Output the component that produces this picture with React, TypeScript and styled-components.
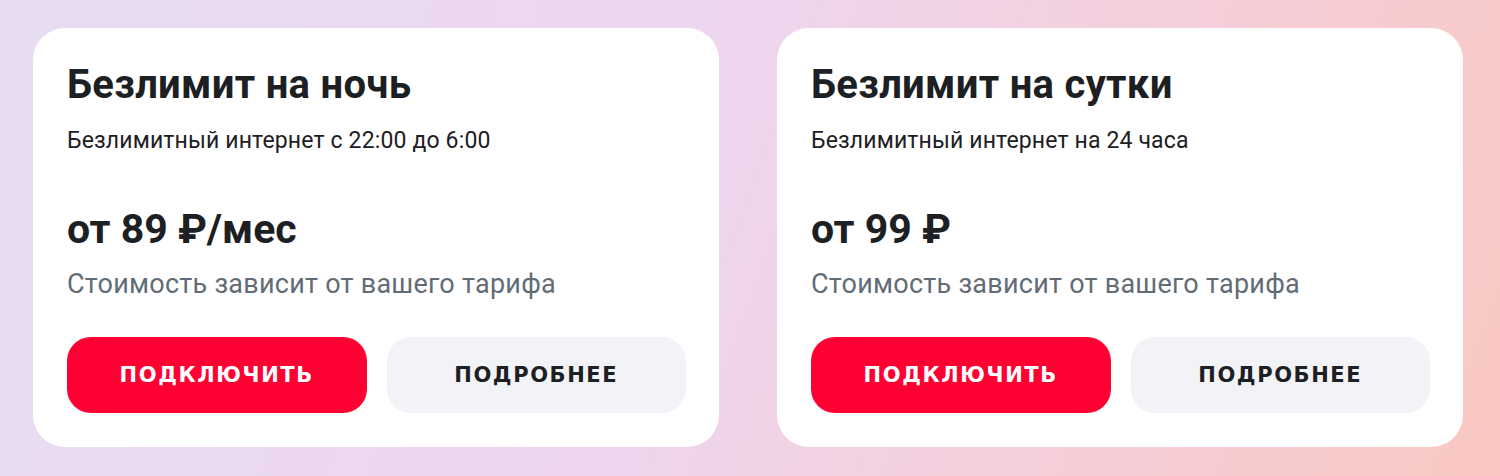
import React from "react";
import styled, { createGlobalStyle } from "styled-components";

const GlobalStyle = createGlobalStyle`
  html, body {
    margin: 0;
    padding: 0;
  }
  body {
    width: 1500px;
    height: 476px;
    overflow: hidden;
    font-family: Roboto, "Noto Sans", Arial, sans-serif;
    -webkit-font-smoothing: antialiased;
  }
  * { box-sizing: border-box; }
`;

const Page = styled.div`
  width: 1500px;
  height: 476px;
  padding: 28px 37px 29px 33px;
  background: linear-gradient(110deg, #e8ddf3 0%, #eed6ef 45%, #f4cfdb 70%, #fac8c2 100%);
  display: flex;
  gap: 58px;
`;

const Card = styled.section`
  flex: 1 1 0;
  height: 419px;
  background: #ffffff;
  border-radius: 32px;
  padding: 33px 33px 34px 34px;
  display: flex;
  flex-direction: column;
`;

const Title = styled.h2`
  margin: 0;
  font-family: Roboto, Arial, sans-serif;
  font-weight: 700;
  font-size: 40px;
  line-height: 48px;
  color: #1d2023;
  letter-spacing: 0.3px;
`;

const Subtitle = styled.p`
  margin: 17px 0 0;
  font-size: 23px;
  line-height: 30px;
  font-weight: 400;
  color: #1d2023;
  letter-spacing: 0.15px;
`;

const Price = styled.div`
  margin-top: 49px;
  font-weight: 700;
  font-size: 41px;
  line-height: 48px;
  color: #1d2023;
`;

const Note = styled.p`
  margin: 14px 0 0;
  font-size: 27px;
  line-height: 34px;
  color: #626c77;
  letter-spacing: 0.25px;
`;

const Actions = styled.div`
  margin-top: auto;
  display: grid;
  grid-template-columns: 1fr 1fr;
  gap: 20px;
`;

const Button = styled.button<{ $variant: "primary" | "secondary" }>`
  height: 76px;
  border: none;
  border-radius: 24px;
  cursor: pointer;
  font-family: "DejaVu Sans", Verdana, sans-serif;
  font-weight: 700;
  font-size: 21px;
  letter-spacing: 1.6px;
  text-transform: uppercase;
  background: ${(p) => (p.$variant === "primary" ? "#ff0032" : "#f2f3f7")};
  color: ${(p) => (p.$variant === "primary" ? "#ffffff" : "#1d2023")};
  display: flex;
  align-items: center;
  justify-content: center;
`;

type Offer = {
  title: string;
  subtitle: string;
  price: string;
};

const offers: Offer[] = [
  {
    title: "Безлимит на ночь",
    subtitle: "Безлимитный интернет с 22:00 до 6:00",
    price: "от 89 ₽/мес",
  },
  {
    title: "Безлимит на сутки",
    subtitle: "Безлимитный интернет на 24 часа",
    price: "от 99 ₽",
  },
];

export default function App() {
  return (
    <>
      <GlobalStyle />
      <Page>
        {offers.map((o) => (
          <Card key={o.title}>
            <Title>{o.title}</Title>
            <Subtitle>{o.subtitle}</Subtitle>
            <Price>{o.price}</Price>
            <Note>Стоимость зависит от вашего тарифа</Note>
            <Actions>
              <Button $variant="primary">Подключить</Button>
              <Button $variant="secondary">Подробнее</Button>
            </Actions>
          </Card>
        ))}
      </Page>
    </>
  );
}
